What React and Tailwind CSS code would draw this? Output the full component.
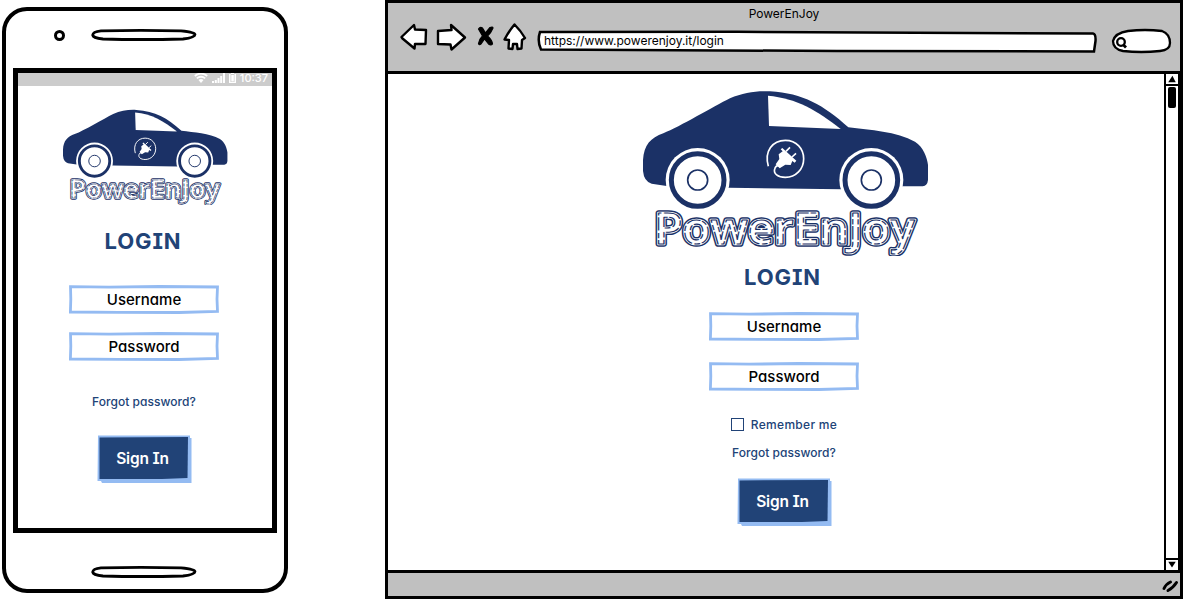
import React from "react";

const NAVY = "#1b3166";

function Wheel({ cx }) {
  return (
    <g>
      <circle cx={cx} cy="285" r="96" fill="#fff" />
      <circle cx={cx} cy="285" r="79" fill="#fff" stroke={NAVY} strokeWidth="15" />
      <circle cx={cx} cy="285" r="30" fill="none" stroke={NAVY} strokeWidth="5" />
    </g>
  );
}

function Logo({ className }) {
  const word = {
    x: 73,
    y: 477,
    fontSize: 130,
    fontWeight: 600,
    fontFamily: '"Open Sans", sans-serif',
    textLength: 781,
    lengthAdjust: "spacingAndGlyphs",
    strokeLinejoin: "round",
  };
  return (
    <svg viewBox="39 15 858 498" className={className}>
      <path
        fill={NAVY}
        d="M110 303 L65 296 Q42 290 39 258 L39 225 C42 180 62 158 100 145 C150 125 250 65 300 40 C340 22 380 17 420 19 C520 25 580 60 655 127 C720 135 800 140 855 170 C880 185 892 220 894 240 L894 285 Q892 303 878 304 L820 304 L635 313 L298 308 Z"
      />
      <path fill="#fff" d="M414 32 C500 40 560 75 632 132 L417 123 Z" />
      <Wheel cx="203" />
      <Wheel cx="724" />
      <path
        fill="none"
        stroke="#fff"
        strokeWidth="5"
        d="M415 244 C402 198 428 166 466 166 C500 166 521 192 521 221 C521 252 498 277 466 277 C443 277 430 266 434 252 Q437 240 450 241"
      />
      <path
        fill="#fff"
        d="M457 189 L499 227 L494 233 L487 228 L482 240 L466 239 L449 250 L437 238 L448 222 L446 208 L458 199 L452 193 Z"
      />
      <path stroke="#fff" strokeWidth="5" d="M468 199 L480 187 M486 216 L498 205" />
      <text {...word} fill={NAVY} stroke={NAVY} strokeWidth="17">PowerEnJoy</text>
      <text {...word} aria-hidden="true" fill="#fff" stroke="#fff" strokeWidth="8">PowerEnJoy</text>
      <text {...word} aria-hidden="true" fill="none" stroke={NAVY} strokeWidth="3.500" strokeDasharray="40 5 16 7">PowerEnJoy</text>
    </svg>
  );
}

function Field({ children }) {
  return (
    <div className="relative flex h-[29px] w-[150px] items-center justify-center">
      <svg viewBox="0 0 150 29" className="absolute inset-0 h-full w-full" fill="none" stroke="#94bbf2" strokeWidth="2.8">
        <path d="M1.5 1.7 L40 2.2 L90 1.5 L148.5 2 L148 14 L148.500 26.5 L110 27.5 L50 27.3 L1.400 27 L1.800 14 Z" />
      </svg>
      <span className="relative text-[15px] leading-none font-medium text-black">{children}</span>
    </div>
  );
}

function SignIn() {
  return (
    <button className="relative flex h-12 w-[95px] items-center justify-center pr-[3px] pb-[1px]">
      <svg viewBox="0 0 95 48" className="absolute inset-0 h-full w-full">
        <path fill="#94bbf2" d="M4 3 L94.500 3 L94.500 48 L5 48 L4 46 L0.500 46 L1 0.500 L93 0.500 L93 3 Z" />
        <path fill="#214377" d="M2.500 2.500 L91 2 L90.500 43 L65 44 L2.500 44 Z" />
      </svg>
      <span className="relative text-[15.500px] leading-none font-semibold tracking-[-0.200px] text-white">Sign In</span>
    </button>
  );
}

function Heading() {
  return <h1 className="text-[22px] leading-6 font-bold tracking-[0.900px] text-[#214377]">LOGIN</h1>;
}

function Forgot() {
  return <a className="mt-px -mb-px text-[12px] leading-4 font-medium tracking-[0.040px] text-[#214377]">Forgot password?</a>;
}

function Speaker({ className }) {
  return (
    <svg viewBox="0 0 106 12" className={className} fill="#fff" stroke="#000" strokeWidth="2.800">
      <path d="M10 1.800 Q50 1 90 1.800 Q104 3 104 5.500 Q104 8.500 92 10 Q50 11 12 10 Q2 9 1.700 6 Q2 2.500 10 1.800 Z" />
    </svg>
  );
}

function Phone() {
  return (
    <section className="mt-[7px] ml-[2px] flex h-[586px] w-[286px] flex-col items-center rounded-[25px] border-[4.500px] border-black bg-white">
      <div className="flex h-[57px] w-full items-center pl-[48px]">
        <div className="mt-[-9px] h-[11px] w-[11px] rounded-full border-[3px] border-black" />
        <Speaker className="mt-[-10px] ml-[26px] h-3 w-[106px]" />
      </div>
      <div className="flex h-[465px] w-[264px] flex-col items-center border-[5px] border-black">
        <div className="flex h-[13px] w-full shrink-0 items-start justify-end gap-[4px] bg-[#ccc] pr-[4px] text-white">
          <svg viewBox="0 0 14 10" className="h-[10px] w-[14px]">
            <path fill="#fff" d="M7 10 L4.500 7 Q7 5 9.500 7 Z" />
            <path fill="none" stroke="#fff" strokeWidth="1.800" d="M0.800 3 Q7 -1.800 13.200 3 M2.800 5.400 Q7 2 11.200 5.400" />
          </svg>
          <svg viewBox="0 0 13 10" className="h-[10px] w-[13px]" fill="#fff">
            <path d="M0 8h2v2H0zM2.800 7h2v3h-2zM5.500 5h2v5h-2zM8.200 3h2v7h-2zM11 0h2v10h-2z" />
          </svg>
          <svg viewBox="0 0 7 10" className="h-[10px] w-[7px]" fill="#fff">
            <path d="M2 0h3v1H2zM0 1h1.500v9H0zM5.500 1h1.500v9H5.500zM0 9h7v1H0zM2.300 2h2.500v6.500H2.300z" />
          </svg>
          <span className="text-[11px] leading-none font-medium">10:37</span>
        </div>
        <Logo className="mt-[23px] h-[96px] w-[165px] shrink-0" />
        <div className="mt-[24px] flex flex-col items-center pr-[4px]"><Heading /></div>
        <div className="mt-8 flex flex-col gap-[18px] pr-[2px]">
          <Field>Username</Field>
          <Field>Password</Field>
        </div>
        <div className="mt-8 flex pr-[2px]"><Forgot /></div>
        <div className="mt-[26px] flex pr-[2px]"><SignIn /></div>
      </div>
      <Speaker className="mt-[33px] mr-[2px] h-3 w-[106px]" />
    </section>
  );
}

function Toolbar() {
  return (
    <div className="flex items-center pt-[2px] pl-[12px]">
      <svg viewBox="0 0 127 32" className="mt-[-5px] h-8 w-[127px]" fill="#fff" stroke="#000" strokeWidth="2.400" strokeLinejoin="round" strokeLinecap="round">
        <path d="M1.500 15 L14 3 L15 7.500 L26 8 L25.500 22 L15 22 L14.500 26.500 L2.500 16.500 Z" />
        <path d="M38 9 L51.500 8 L51 3 L65 15.500 L51.500 27.500 L50.500 22.500 L38 22 Z" />
        <path fill="#000" strokeWidth="1.200" d="M78.500 7 Q80 4.500 82.500 6 L85.500 11 L90 5.500 Q93 4.500 93 6 Q91 11 87.500 14 Q92 18 92.500 22 Q91 24 88.500 22 L84.500 17 L81 22 Q79 23.500 78.500 21.500 Q79 17.500 82.500 14 Z" />
        <path d="M114.500 2.500 Q121 9 125 16 L122 18 L121.500 26.500 L117.500 27 L117 22 L113 22 L112.500 27 L108.500 26.500 L109 18 L104.500 17.500 Q109 9 114.500 2.500 Z" />
      </svg>
      <div className="relative mt-[2px] ml-[10px] flex h-[23px] w-[560px] items-center pl-[7px]">
        <svg viewBox="0 0 560 23" className="absolute inset-0 h-full w-full" fill="#fff" stroke="#000" strokeWidth="2.500">
          <path d="M3 2 L200 1.800 L556 3.500 Q559 4 558.500 11 L557 21.500 L300 21 L4 19.500 Q0 11 3 2 Z" />
        </svg>
        <span className="relative mt-[-1px] text-[12px] leading-none">https://www.powerenjoy.it/login</span>
      </div>
      <svg viewBox="0 0 61 26" className="mt-[2px] ml-[14px] h-[26px] w-[61px]" fill="#fff" stroke="#000" strokeWidth="2.300">
        <path d="M17 3 Q34 1 51 3 Q59 6 59 15 Q59 22 49 23 Q30 25 12 23 Q2 21 2 13 Q4 5 17 3 Z" />
        <circle cx="10" cy="14" r="3.800" />
        <path strokeWidth="2.800" d="M12 16.500 L15 19.500" />
      </svg>
    </div>
  );
}

function ScrollBar() {
  return (
    <div className="flex w-[16px] flex-col items-center border-l-[2px] border-r-[2px] border-black bg-white">
      <svg viewBox="0 0 12 12" className="h-3 w-3 border-b-[2px] border-black"><path d="M1.500 10 L6.500 2 L10.500 10Z" /></svg>
      <div className="mt-[1px] h-[21px] w-[8px] rounded-[2px] bg-black" />
      <svg viewBox="0 0 12 12" className="mt-auto h-3 w-3 border-t-[2px] border-black"><path d="M1.500 2 L10.500 2 L6 9Z" /></svg>
    </div>
  );
}

function Browser() {
  return (
    <section className="ml-[97px] flex h-[599px] w-[798px] flex-col border-[3px] border-black bg-white">
      <header className="h-[71px] shrink-0 border-b-[3px] border-black bg-[#c0c0c0]">
        <div className="flex h-[21px] items-center justify-center text-[12px] leading-none">PowerEnJoy</div>
        <Toolbar />
      </header>
      <main className="flex flex-1">
        <div className="flex flex-1 flex-col items-center pt-[16px] pl-[16px]">
          <Logo className="ml-[3px] h-[166px] w-[286px] shrink-0" />
          <div className="mt-[9px] mr-[3px]"><Heading /></div>
          <div className="mt-[23px] flex flex-col gap-[21px]">
            <Field>Username</Field>
            <Field>Password</Field>
          </div>
          <label className="mt-[26px] flex h-4 items-center gap-[7px] text-[12px] font-medium tracking-[0.300px] text-[#214377]">
            <span className="mb-px h-[13px] w-[13px] border border-[#214377]" />
            Remember me
          </label>
          <div className="mt-[11px] flex"><Forgot /></div>
          <div className="mt-[18px] flex"><SignIn /></div>
        </div>
        <ScrollBar />
      </main>
      <footer className="flex h-[26px] shrink-0 items-center justify-end border-t-[3px] border-black bg-[#c0c0c0] pr-[1px]">
        <svg viewBox="0 0 17 14" className="mt-[2px] h-[14px] w-[17px]" fill="none" stroke="#000" strokeWidth="3" strokeLinecap="round">
          <path d="M2 9.500 Q4 5 8.500 3 M6 11.500 Q11 9 14.500 3.500" />
        </svg>
      </footer>
    </section>
  );
}

export default function App() {
  return (
    <div className="flex h-[600px] w-[1184px] overflow-hidden bg-white font-['Inter',sans-serif] [font-feature-settings:'cv08','cv11']">
      <Phone />
      <Browser />
    </div>
  );
}
